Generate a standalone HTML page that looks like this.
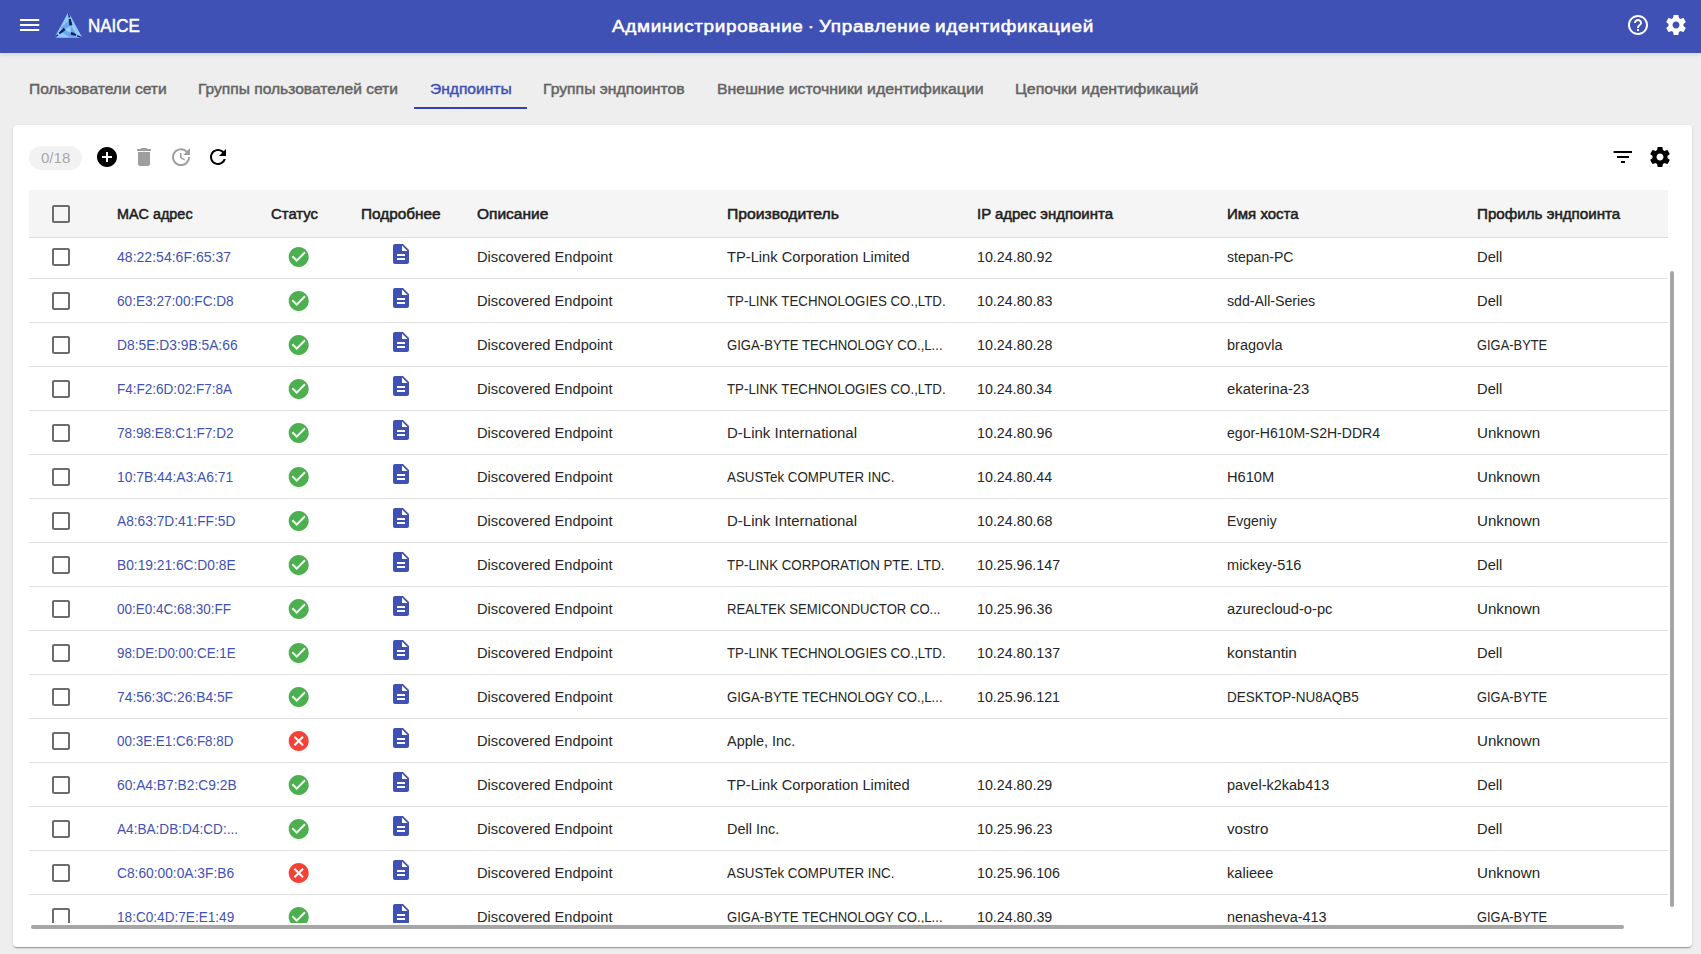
<!DOCTYPE html><html lang="ru"><head><meta charset="utf-8"><title>NAICE</title><style>*{box-sizing:border-box;margin:0;padding:0}
span{transform-origin:0 50%}
html,body{width:1701px;height:954px;overflow:hidden;background:#eee;font-family:"Liberation Sans",sans-serif;}
.ic{position:absolute;width:24px;height:24px;display:block}
#hdr{position:absolute;left:0;top:0;width:1701px;height:53px;background:#3f51b5;box-shadow:0 1px 5px rgba(0,0,0,.14);z-index:5}
#logo{position:absolute;left:50px;top:8px}
.brand{position:absolute;top:14px;height:24px;line-height:24px;font-size:18.5px;color:#fff;white-space:nowrap;-webkit-text-stroke:.5px #fff}
.title{position:absolute;top:13px;height:26px;line-height:26px;font-size:17.3px;color:#fff;white-space:nowrap;-webkit-text-stroke:.55px #fff;word-spacing:-1.5px;letter-spacing:.6px}
#tabs{position:absolute;left:0;top:53px;width:1701px;height:72px}
.tab{position:absolute;top:24px;height:24px;line-height:24px;font-size:14px;color:#636363;white-space:nowrap;-webkit-text-stroke:.42px #636363}
.tab.act{color:#3f51b5;-webkit-text-stroke-color:#3f51b5}
#ink{position:absolute;left:414px;top:54px;width:113px;height:2px;background:#3342ad}
#card{position:absolute;left:13px;top:125px;width:1679px;height:822px;background:#fff;border-radius:4px;box-shadow:0 2px 1px -1px rgba(0,0,0,.2),0 1px 1px 0 rgba(0,0,0,.14),0 1px 3px 0 rgba(0,0,0,.12)}
#chip{position:absolute;left:16px;top:21px;width:53px;height:24px;border-radius:12px;background:#f2f2f2}
.chipt{position:absolute;top:20.6px;height:24px;line-height:24px;font-size:14px;color:#a9a9a9;white-space:nowrap}
#tbl{position:absolute;left:16px;top:65px;width:1639px;height:733px;overflow:hidden}
#thead{position:absolute;left:0;top:0;width:1639px;height:48px;background:#f5f5f5;border-bottom:1px solid #dcdcdc}
.th{position:absolute;top:12px;height:24px;line-height:24px;font-size:14px;color:#212121;white-space:nowrap;-webkit-text-stroke:.5px #212121}
#body{position:absolute;left:0;top:0;width:1639px}
.row{position:absolute;left:0;width:1639px;height:44px;border-bottom:1px solid #e0e0e0}
.c{position:absolute;top:10px;height:24px;line-height:24px;font-size:14px;color:#262626;white-space:nowrap}
.c.mac{color:#3f51b5}
#vsb{position:absolute;left:1657px;top:146px;width:4px;height:636px;border-radius:2px;background:#a6a6a6}
#hsb{position:absolute;left:18px;top:800px;width:1593px;height:4px;border-radius:2px;background:#a6a6a6}
</style></head><body>
<svg width="0" height="0" style="position:absolute"><defs><symbol id="i-menu" viewBox="0 0 24 24"><path d="M3 18h19.2v-2H3v2zm0-5h19.2v-2H3v2zm0-7v2h19.2V6H3z"/></symbol><symbol id="i-help" viewBox="0 0 24 24"><path d="M11 18h2v-2h-2v2zm1-16C6.48 2 2 6.48 2 12s4.48 10 10 10 10-4.48 10-10S17.52 2 12 2zm0 18c-4.41 0-8-3.59-8-8s3.59-8 8-8 8 3.59 8 8-3.59 8-8 8zm0-14c-2.21 0-4 1.79-4 4h2c0-1.1.9-2 2-2s2 .9 2 2c0 2-3 1.75-3 5h2c0-2.25 3-2.5 3-5 0-2.21-1.79-4-4-4z"/></symbol><symbol id="i-settings" viewBox="0 0 24 24"><path d="M19.43 12.98c.04-.32.07-.64.07-.98s-.03-.66-.07-.98l2.11-1.65c.19-.15.24-.42.12-.64l-2-3.46c-.12-.22-.39-.3-.61-.22l-2.49 1c-.52-.4-1.08-.73-1.69-.98l-.38-2.65C14.46 2.18 14.25 2 14 2h-4c-.25 0-.46.18-.49.42l-.38 2.65c-.61.25-1.17.59-1.69.98l-2.49-1c-.23-.09-.49 0-.61.22l-2 3.46c-.13.22-.07.49.12.64l2.11 1.65c-.04.32-.07.65-.07.98s.03.66.07.98l-2.11 1.65c-.19.15-.24.42-.12.64l2 3.46c.12.22.39.3.61.22l2.49-1c.52.4 1.08.73 1.69.98l.38 2.65c.03.24.24.42.49.42h4c.25 0 .46-.18.49-.42l.38-2.65c.61-.25 1.17-.59 1.69-.98l2.49 1c.23.09.49 0 .61-.22l2-3.46c.12-.22.07-.49-.12-.64l-2.11-1.65zM12 15.5c-1.93 0-3.5-1.57-3.5-3.5s1.57-3.5 3.5-3.5 3.5 1.57 3.5 3.5-1.57 3.5-3.5 3.5z"/></symbol><symbol id="i-add" viewBox="0 0 24 24"><path d="M12 2C6.48 2 2 6.48 2 12s4.48 10 10 10 10-4.48 10-10S17.52 2 12 2zm5 11h-4v4h-2v-4H7v-2h4V7h2v4h4v2z"/></symbol><symbol id="i-delete" viewBox="0 0 24 24"><path d="M6 19c0 1.1.9 2 2 2h8c1.1 0 2-.9 2-2V7H6v12zM19 4h-3.5l-1-1h-5l-1 1H5v2h14V4z"/></symbol><symbol id="i-update" viewBox="0 0 24 24"><path d="M21 10.12h-6.78l2.74-2.82c-2.73-2.7-7.15-2.8-9.88-.1-2.73 2.71-2.73 7.08 0 9.79s7.15 2.71 9.88 0C18.32 15.65 19 14.08 19 12.1h2c0 1.98-.88 4.55-2.64 6.29-3.51 3.48-9.21 3.48-12.72 0-3.5-3.47-3.53-9.11-.02-12.58s9.14-3.47 12.65 0L21 3v7.12zM12.5 8v4.25l3.5 2.08-.72 1.21L11 13V8h1.5z"/></symbol><symbol id="i-refresh" viewBox="0 0 24 24"><path d="M17.65 6.35C16.2 4.9 14.21 4 12 4c-4.42 0-7.99 3.58-7.99 8s3.57 8 7.99 8c3.73 0 6.84-2.55 7.73-6h-2.08c-.82 2.33-3.04 4-5.65 4-3.31 0-6-2.69-6-6s2.69-6 6-6c1.66 0 3.14.69 4.22 1.78L13 11h7V4l-2.35 2.35z"/></symbol><symbol id="i-filter" viewBox="0 0 24 24"><path d="M10 18h4v-2h-4v2zM2.6 6v2H21V6H2.6zM6 13h12v-2H6v2z"/></symbol><symbol id="i-check" viewBox="0 0 24 24"><path d="M12 2C6.48 2 2 6.48 2 12s4.48 10 10 10 10-4.48 10-10S17.52 2 12 2zm-2 15l-5-5 1.41-1.41L10 14.17l7.59-7.59L19 8l-9 9z"/></symbol><symbol id="i-cancel" viewBox="0 0 24 24"><path d="M12 2C6.47 2 2 6.47 2 12s4.47 10 10 10 10-4.47 10-10S17.53 2 12 2zm5 13.59L15.59 17 12 13.41 8.41 17 7 15.59 10.59 12 7 8.41 8.41 7 12 10.59 15.59 7 17 8.41 13.41 12 17 15.59z"/></symbol><symbol id="i-doc" viewBox="0 0 24 24"><path d="M14 2H6c-1.1 0-1.99.9-1.99 2L4 20c0 1.1.89 2 1.99 2H18c1.1 0 2-.9 2-2V8l-6-6zm2 16H8v-2h8v2zm0-4H8v-2h8v2zm-3-5V3.5L18.5 9H13z"/></symbol><symbol id="i-box" viewBox="0 0 24 24"><path d="M19 5v14H5V5h14m0-2H5c-1.1 0-2 .9-2 2v14c0 1.1.9 2 2 2h14c1.1 0 2-.9 2-2V5c0-1.1-.9-2-2-2z"/></symbol></defs></svg>
<div id="hdr">
<svg class="ic" style="left:17px;top:13px;fill:#fff;"><use href="#i-menu"/></svg>
<svg id="logo" viewBox="50 8 40 35" width="40" height="35"><polygon points="68.4,12 54.4,37.8 82.3,37.8" fill="#90caf9"/><polygon points="69.2,20 70.2,26.3 64.6,29.8 60.5,28" fill="#6da5f3"/><polygon points="70.5,24.5 76.4,35 70.9,33" fill="#6da5f3"/><polygon points="61.5,32.3 64.6,29.8 70.8,32.8 70.9,37.8" fill="#6da5f3"/><polygon points="70.9,33.4 70.9,37.8 77.6,37.8" fill="#6da5f3"/><polygon points="70.1,26.2 64.7,29.7 70.6,32.6" fill="#9bd1fb"/><polygon points="68.10,12.67 68.60,17.63 70.20,17.33 68.85,12.52" fill="#0b1e5b"/><polygon points="68.75,19.11 69.43,25.68 72.37,25.12 70.60,18.76" fill="#0b1e5b"/><polygon points="55.16,37.72 58.38,35.31 57.42,34.22 54.64,37.15" fill="#0b1e5b"/><polygon points="59.78,34.26 65.60,29.92 63.60,27.68 58.62,32.95" fill="#0b1e5b"/><polygon points="81.91,37.21 77.50,34.88 76.85,36.47 81.62,37.92" fill="#0b1e5b"/><polygon points="76.42,34.32 71.47,31.71 70.33,34.49 75.68,36.11" fill="#0b1e5b"/></svg>
<span id="t1" class="brand" style="left:88.23px;transform:scaleX(0.9188);">NAICE</span>
<span id="t2" class="title" style="left:612.36px;transform:scaleX(1.0946);">Администрирование · Управление идентификацией</span>
<svg class="ic" style="left:1626.2px;top:13px;fill:#fff;"><use href="#i-help"/></svg>
<svg class="ic" style="left:1663.5px;top:13px;fill:#fff;"><use href="#i-settings"/></svg>
</div>
<div id="tabs">
<span id="t3" class="tab" style="left:29.00px;transform:scaleX(1.1118);">Пользователи сети</span>
<span id="t4" class="tab" style="left:198.00px;transform:scaleX(1.1129);">Группы пользователей сети</span>
<span id="t5" class="tab act" style="left:430.00px;transform:scaleX(1.1138);">Эндпоинты</span>
<span id="t6" class="tab" style="left:543.00px;transform:scaleX(1.1246);">Группы эндпоинтов</span>
<span id="t7" class="tab" style="left:717.00px;transform:scaleX(1.1322);">Внешние источники идентификации</span>
<span id="t8" class="tab" style="left:1015.00px;transform:scaleX(1.1372);">Цепочки идентификаций</span>
<div id="ink"></div></div>
<div id="card">
<div id="chip"></div>
<span id="t9" class="chipt" style="left:28.19px;transform:scaleX(1.0748);">0/18</span>
<svg class="ic" style="left:81.5px;top:20px;fill:#000;"><use href="#i-add"/></svg>
<svg class="ic" style="left:118.5px;top:20px;fill:#9e9e9e;"><use href="#i-delete"/></svg>
<svg class="ic" style="left:155.5px;top:20px;fill:#9e9e9e;"><use href="#i-update"/></svg>
<svg class="ic" style="left:192.5px;top:20px;fill:#000;"><use href="#i-refresh"/></svg>
<svg class="ic" style="left:1597.5px;top:20px;fill:#000;"><use href="#i-filter"/></svg>
<svg class="ic" style="left:1634.5px;top:20px;fill:#000;"><use href="#i-settings"/></svg>
<div id="tbl">
<div id="body">
<div class="row" style="top:44.5px">
<svg class="ic" style="left:20px;top:10px;fill:#6c6c6c;"><use href="#i-box"/></svg>
<span id="t10" class="c mac" style="left:88.00px;transform:scaleX(1.0036);">48:22:54:6F:65:37</span>
<svg class="ic" style="left:257px;top:10.5px;fill:#4caf50;"><use href="#i-check" x="0.7"/></svg>
<svg class="ic" style="left:360px;top:7px;fill:#3f51b5;"><use href="#i-doc"/></svg>
<span id="t11" class="c" style="left:448.00px;transform:scaleX(1.0491);">Discovered Endpoint</span>
<span id="t12" class="c" style="left:698.00px;transform:scaleX(1.0481);">TP-Link Corporation Limited</span>
<span id="t13" class="c" style="left:948.00px;transform:scaleX(1.0190);">10.24.80.92</span>
<span id="t14" class="c" style="left:1198.00px;transform:scaleX(1.0047);">stepan-PC</span>
<span id="t15" class="c" style="left:1448.00px;transform:scaleX(1.0524);">Dell</span>
</div>
<div class="row" style="top:88.5px">
<svg class="ic" style="left:20px;top:10px;fill:#6c6c6c;"><use href="#i-box"/></svg>
<span id="t16" class="c mac" style="left:88.00px;transform:scaleX(0.9737);">60:E3:27:00:FC:D8</span>
<svg class="ic" style="left:257px;top:10.5px;fill:#4caf50;"><use href="#i-check" x="0.7"/></svg>
<svg class="ic" style="left:360px;top:7px;fill:#3f51b5;"><use href="#i-doc"/></svg>
<span id="t17" class="c" style="left:448.00px;transform:scaleX(1.0491);">Discovered Endpoint</span>
<span id="t18" class="c" style="left:698.00px;transform:scaleX(0.9483);">TP-LINK TECHNOLOGIES CO.,LTD.</span>
<span id="t19" class="c" style="left:948.00px;transform:scaleX(1.0182);">10.24.80.83</span>
<span id="t20" class="c" style="left:1198.00px;transform:scaleX(1.0123);">sdd-All-Series</span>
<span id="t21" class="c" style="left:1448.00px;transform:scaleX(1.0524);">Dell</span>
</div>
<div class="row" style="top:132.5px">
<svg class="ic" style="left:20px;top:10px;fill:#6c6c6c;"><use href="#i-box"/></svg>
<span id="t22" class="c mac" style="left:88.00px;transform:scaleX(0.9868);">D8:5E:D3:9B:5A:66</span>
<svg class="ic" style="left:257px;top:10.5px;fill:#4caf50;"><use href="#i-check" x="0.7"/></svg>
<svg class="ic" style="left:360px;top:7px;fill:#3f51b5;"><use href="#i-doc"/></svg>
<span id="t23" class="c" style="left:448.00px;transform:scaleX(1.0491);">Discovered Endpoint</span>
<span id="t24" class="c" style="left:698.00px;transform:scaleX(0.9381);">GIGA-BYTE TECHNOLOGY CO.,L...</span>
<span id="t25" class="c" style="left:948.00px;transform:scaleX(1.0205);">10.24.80.28</span>
<span id="t26" class="c" style="left:1198.00px;transform:scaleX(1.0350);">bragovla</span>
<span id="t27" class="c" style="left:1448.00px;transform:scaleX(0.9210);">GIGA-BYTE</span>
</div>
<div class="row" style="top:176.5px">
<svg class="ic" style="left:20px;top:10px;fill:#6c6c6c;"><use href="#i-box"/></svg>
<span id="t28" class="c mac" style="left:88.00px;transform:scaleX(0.9660);">F4:F2:6D:02:F7:8A</span>
<svg class="ic" style="left:257px;top:10.5px;fill:#4caf50;"><use href="#i-check" x="0.7"/></svg>
<svg class="ic" style="left:360px;top:7px;fill:#3f51b5;"><use href="#i-doc"/></svg>
<span id="t29" class="c" style="left:448.00px;transform:scaleX(1.0491);">Discovered Endpoint</span>
<span id="t30" class="c" style="left:698.00px;transform:scaleX(0.9483);">TP-LINK TECHNOLOGIES CO.,LTD.</span>
<span id="t31" class="c" style="left:948.00px;transform:scaleX(1.0147);">10.24.80.34</span>
<span id="t32" class="c" style="left:1198.00px;transform:scaleX(1.0578);">ekaterina-23</span>
<span id="t33" class="c" style="left:1448.00px;transform:scaleX(1.0524);">Dell</span>
</div>
<div class="row" style="top:220.5px">
<svg class="ic" style="left:20px;top:10px;fill:#6c6c6c;"><use href="#i-box"/></svg>
<span id="t34" class="c mac" style="left:88.00px;transform:scaleX(0.9726);">78:98:E8:C1:F7:D2</span>
<svg class="ic" style="left:257px;top:10.5px;fill:#4caf50;"><use href="#i-check" x="0.7"/></svg>
<svg class="ic" style="left:360px;top:7px;fill:#3f51b5;"><use href="#i-doc"/></svg>
<span id="t35" class="c" style="left:448.00px;transform:scaleX(1.0491);">Discovered Endpoint</span>
<span id="t36" class="c" style="left:698.00px;transform:scaleX(1.0706);">D-Link International</span>
<span id="t37" class="c" style="left:948.00px;transform:scaleX(1.0196);">10.24.80.96</span>
<span id="t38" class="c" style="left:1198.00px;transform:scaleX(1.0035);">egor-H610M-S2H-DDR4</span>
<span id="t39" class="c" style="left:1448.00px;transform:scaleX(1.0823);">Unknown</span>
</div>
<div class="row" style="top:264.5px">
<svg class="ic" style="left:20px;top:10px;fill:#6c6c6c;"><use href="#i-box"/></svg>
<span id="t40" class="c mac" style="left:88.00px;transform:scaleX(0.9889);">10:7B:44:A3:A6:71</span>
<svg class="ic" style="left:257px;top:10.5px;fill:#4caf50;"><use href="#i-check" x="0.7"/></svg>
<svg class="ic" style="left:360px;top:7px;fill:#3f51b5;"><use href="#i-doc"/></svg>
<span id="t41" class="c" style="left:448.00px;transform:scaleX(1.0491);">Discovered Endpoint</span>
<span id="t42" class="c" style="left:698.00px;transform:scaleX(0.9525);">ASUSTek COMPUTER INC.</span>
<span id="t43" class="c" style="left:948.00px;transform:scaleX(1.0147);">10.24.80.44</span>
<span id="t44" class="c" style="left:1198.00px;transform:scaleX(1.0460);">H610M</span>
<span id="t45" class="c" style="left:1448.00px;transform:scaleX(1.0823);">Unknown</span>
</div>
<div class="row" style="top:308.5px">
<svg class="ic" style="left:20px;top:10px;fill:#6c6c6c;"><use href="#i-box"/></svg>
<span id="t46" class="c mac" style="left:88.00px;transform:scaleX(0.9811);">A8:63:7D:41:FF:5D</span>
<svg class="ic" style="left:257px;top:10.5px;fill:#4caf50;"><use href="#i-check" x="0.7"/></svg>
<svg class="ic" style="left:360px;top:7px;fill:#3f51b5;"><use href="#i-doc"/></svg>
<span id="t47" class="c" style="left:448.00px;transform:scaleX(1.0491);">Discovered Endpoint</span>
<span id="t48" class="c" style="left:698.00px;transform:scaleX(1.0706);">D-Link International</span>
<span id="t49" class="c" style="left:948.00px;transform:scaleX(1.0205);">10.24.80.68</span>
<span id="t50" class="c" style="left:1198.00px;transform:scaleX(0.9958);">Evgeniy</span>
<span id="t51" class="c" style="left:1448.00px;transform:scaleX(1.0823);">Unknown</span>
</div>
<div class="row" style="top:352.5px">
<svg class="ic" style="left:20px;top:10px;fill:#6c6c6c;"><use href="#i-box"/></svg>
<span id="t52" class="c mac" style="left:88.00px;transform:scaleX(0.9829);">B0:19:21:6C:D0:8E</span>
<svg class="ic" style="left:257px;top:10.5px;fill:#4caf50;"><use href="#i-check" x="0.7"/></svg>
<svg class="ic" style="left:360px;top:7px;fill:#3f51b5;"><use href="#i-doc"/></svg>
<span id="t53" class="c" style="left:448.00px;transform:scaleX(1.0491);">Discovered Endpoint</span>
<span id="t54" class="c" style="left:698.00px;transform:scaleX(0.9503);">TP-LINK CORPORATION PTE. LTD.</span>
<span id="t55" class="c" style="left:948.00px;transform:scaleX(1.0159);">10.25.96.147</span>
<span id="t56" class="c" style="left:1198.00px;transform:scaleX(1.0404);">mickey-516</span>
<span id="t57" class="c" style="left:1448.00px;transform:scaleX(1.0524);">Dell</span>
</div>
<div class="row" style="top:396.5px">
<svg class="ic" style="left:20px;top:10px;fill:#6c6c6c;"><use href="#i-box"/></svg>
<span id="t58" class="c mac" style="left:88.00px;transform:scaleX(0.9647);">00:E0:4C:68:30:FF</span>
<svg class="ic" style="left:257px;top:10.5px;fill:#4caf50;"><use href="#i-check" x="0.7"/></svg>
<svg class="ic" style="left:360px;top:7px;fill:#3f51b5;"><use href="#i-doc"/></svg>
<span id="t59" class="c" style="left:448.00px;transform:scaleX(1.0491);">Discovered Endpoint</span>
<span id="t60" class="c" style="left:698.00px;transform:scaleX(0.9356);">REALTEK SEMICONDUCTOR CO...</span>
<span id="t61" class="c" style="left:948.00px;transform:scaleX(1.0196);">10.25.96.36</span>
<span id="t62" class="c" style="left:1198.00px;transform:scaleX(1.0501);">azurecloud-o-pc</span>
<span id="t63" class="c" style="left:1448.00px;transform:scaleX(1.0823);">Unknown</span>
</div>
<div class="row" style="top:440.5px">
<svg class="ic" style="left:20px;top:10px;fill:#6c6c6c;"><use href="#i-box"/></svg>
<span id="t64" class="c mac" style="left:88.00px;transform:scaleX(0.9527);">98:DE:D0:00:CE:1E</span>
<svg class="ic" style="left:257px;top:10.5px;fill:#4caf50;"><use href="#i-check" x="0.7"/></svg>
<svg class="ic" style="left:360px;top:7px;fill:#3f51b5;"><use href="#i-doc"/></svg>
<span id="t65" class="c" style="left:448.00px;transform:scaleX(1.0491);">Discovered Endpoint</span>
<span id="t66" class="c" style="left:698.00px;transform:scaleX(0.9483);">TP-LINK TECHNOLOGIES CO.,LTD.</span>
<span id="t67" class="c" style="left:948.00px;transform:scaleX(1.0159);">10.24.80.137</span>
<span id="t68" class="c" style="left:1198.00px;transform:scaleX(1.0947);">konstantin</span>
<span id="t69" class="c" style="left:1448.00px;transform:scaleX(1.0524);">Dell</span>
</div>
<div class="row" style="top:484.5px">
<svg class="ic" style="left:20px;top:10px;fill:#6c6c6c;"><use href="#i-box"/></svg>
<span id="t70" class="c mac" style="left:88.00px;transform:scaleX(0.9874);">74:56:3C:26:B4:5F</span>
<svg class="ic" style="left:257px;top:10.5px;fill:#4caf50;"><use href="#i-check" x="0.7"/></svg>
<svg class="ic" style="left:360px;top:7px;fill:#3f51b5;"><use href="#i-doc"/></svg>
<span id="t71" class="c" style="left:448.00px;transform:scaleX(1.0491);">Discovered Endpoint</span>
<span id="t72" class="c" style="left:698.00px;transform:scaleX(0.9381);">GIGA-BYTE TECHNOLOGY CO.,L...</span>
<span id="t73" class="c" style="left:948.00px;transform:scaleX(1.0154);">10.25.96.121</span>
<span id="t74" class="c" style="left:1198.00px;transform:scaleX(0.9648);">DESKTOP-NU8AQB5</span>
<span id="t75" class="c" style="left:1448.00px;transform:scaleX(0.9210);">GIGA-BYTE</span>
</div>
<div class="row" style="top:528.5px">
<svg class="ic" style="left:20px;top:10px;fill:#6c6c6c;"><use href="#i-box"/></svg>
<span id="t76" class="c mac" style="left:88.00px;transform:scaleX(0.9594);">00:3E:E1:C6:F8:8D</span>
<svg class="ic" style="left:257px;top:10.5px;fill:#f44336;"><use href="#i-cancel" x="0.7"/></svg>
<svg class="ic" style="left:360px;top:7px;fill:#3f51b5;"><use href="#i-doc"/></svg>
<span id="t77" class="c" style="left:448.00px;transform:scaleX(1.0491);">Discovered Endpoint</span>
<span id="t78" class="c" style="left:698.00px;transform:scaleX(1.0334);">Apple, Inc.</span>
<span id="t79" class="c" style="left:1448.00px;transform:scaleX(1.0823);">Unknown</span>
</div>
<div class="row" style="top:572.5px">
<svg class="ic" style="left:20px;top:10px;fill:#6c6c6c;"><use href="#i-box"/></svg>
<span id="t80" class="c mac" style="left:88.00px;transform:scaleX(0.9849);">60:A4:B7:B2:C9:2B</span>
<svg class="ic" style="left:257px;top:10.5px;fill:#4caf50;"><use href="#i-check" x="0.7"/></svg>
<svg class="ic" style="left:360px;top:7px;fill:#3f51b5;"><use href="#i-doc"/></svg>
<span id="t81" class="c" style="left:448.00px;transform:scaleX(1.0491);">Discovered Endpoint</span>
<span id="t82" class="c" style="left:698.00px;transform:scaleX(1.0481);">TP-Link Corporation Limited</span>
<span id="t83" class="c" style="left:948.00px;transform:scaleX(1.0178);">10.24.80.29</span>
<span id="t84" class="c" style="left:1198.00px;transform:scaleX(1.0353);">pavel-k2kab413</span>
<span id="t85" class="c" style="left:1448.00px;transform:scaleX(1.0524);">Dell</span>
</div>
<div class="row" style="top:616.5px">
<svg class="ic" style="left:20px;top:10px;fill:#6c6c6c;"><use href="#i-box"/></svg>
<span id="t86" class="c mac" style="left:88.00px;transform:scaleX(0.9723);">A4:BA:DB:D4:CD:...</span>
<svg class="ic" style="left:257px;top:10.5px;fill:#4caf50;"><use href="#i-check" x="0.7"/></svg>
<svg class="ic" style="left:360px;top:7px;fill:#3f51b5;"><use href="#i-doc"/></svg>
<span id="t87" class="c" style="left:448.00px;transform:scaleX(1.0491);">Discovered Endpoint</span>
<span id="t88" class="c" style="left:698.00px;transform:scaleX(1.0322);">Dell Inc.</span>
<span id="t89" class="c" style="left:948.00px;transform:scaleX(1.0182);">10.25.96.23</span>
<span id="t90" class="c" style="left:1198.00px;transform:scaleX(1.0844);">vostro</span>
<span id="t91" class="c" style="left:1448.00px;transform:scaleX(1.0524);">Dell</span>
</div>
<div class="row" style="top:660.5px">
<svg class="ic" style="left:20px;top:10px;fill:#6c6c6c;"><use href="#i-box"/></svg>
<span id="t92" class="c mac" style="left:88.00px;transform:scaleX(0.9832);">C8:60:00:0A:3F:B6</span>
<svg class="ic" style="left:257px;top:10.5px;fill:#f44336;"><use href="#i-cancel" x="0.7"/></svg>
<svg class="ic" style="left:360px;top:7px;fill:#3f51b5;"><use href="#i-doc"/></svg>
<span id="t93" class="c" style="left:448.00px;transform:scaleX(1.0491);">Discovered Endpoint</span>
<span id="t94" class="c" style="left:698.00px;transform:scaleX(0.9525);">ASUSTek COMPUTER INC.</span>
<span id="t95" class="c" style="left:948.00px;transform:scaleX(1.0143);">10.25.96.106</span>
<span id="t96" class="c" style="left:1198.00px;transform:scaleX(1.0428);">kalieee</span>
<span id="t97" class="c" style="left:1448.00px;transform:scaleX(1.0823);">Unknown</span>
</div>
<div class="row" style="top:704.5px">
<svg class="ic" style="left:20px;top:10px;fill:#6c6c6c;"><use href="#i-box"/></svg>
<span id="t98" class="c mac" style="left:88.00px;transform:scaleX(0.9720);">18:C0:4D:7E:E1:49</span>
<svg class="ic" style="left:257px;top:10.5px;fill:#4caf50;"><use href="#i-check" x="0.7"/></svg>
<svg class="ic" style="left:360px;top:7px;fill:#3f51b5;"><use href="#i-doc"/></svg>
<span id="t99" class="c" style="left:448.00px;transform:scaleX(1.0491);">Discovered Endpoint</span>
<span id="t100" class="c" style="left:698.00px;transform:scaleX(0.9381);">GIGA-BYTE TECHNOLOGY CO.,L...</span>
<span id="t101" class="c" style="left:948.00px;transform:scaleX(1.0178);">10.24.80.39</span>
<span id="t102" class="c" style="left:1198.00px;transform:scaleX(1.0319);">nenasheva-413</span>
<span id="t103" class="c" style="left:1448.00px;transform:scaleX(0.9210);">GIGA-BYTE</span>
</div>
</div>
<div id="thead">
<svg class="ic" style="left:20px;top:12px;fill:#6c6c6c;"><use href="#i-box"/></svg>
<span id="t104" class="th" style="left:88.00px;transform:scaleX(1.0278);">MAC адрес</span>
<span id="t105" class="th" style="left:242.00px;transform:scaleX(1.0633);">Статус</span>
<span id="t106" class="th" style="left:332.00px;transform:scaleX(1.0968);">Подробнее</span>
<span id="t107" class="th" style="left:448.00px;transform:scaleX(1.1064);">Описание</span>
<span id="t108" class="th" style="left:698.00px;transform:scaleX(1.1233);">Производитель</span>
<span id="t109" class="th" style="left:948.00px;transform:scaleX(1.0681);">IP адрес эндпоинта</span>
<span id="t110" class="th" style="left:1198.00px;transform:scaleX(1.0727);">Имя хоста</span>
<span id="t111" class="th" style="left:1448.00px;transform:scaleX(1.0829);">Профиль эндпоинта</span>
</div>
</div>
<div id="vsb"></div><div id="hsb"></div>
</div>
</body></html>
